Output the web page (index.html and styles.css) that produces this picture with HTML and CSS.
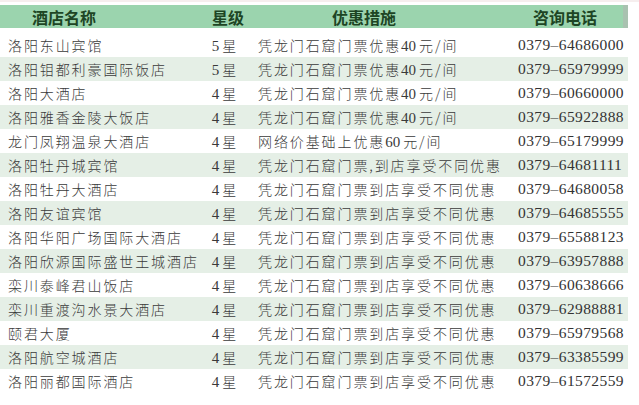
FILE: index.html
```html
<!DOCTYPE html>
<html lang="zh-CN">
<head>
<meta charset="utf-8">
<title>酒店优惠</title>
<link rel="stylesheet" href="styles.css">
</head>
<body>
<div class="table">
  <div class="row head">
    <div class="c name">酒店名称</div>
    <div class="c star">星级</div>
    <div class="c offer">优惠措施</div>
    <div class="c phone">咨询电话</div>
  </div>
  <div class="body">
    <div class="row"><div class="c name">洛阳东山宾馆</div><div class="c star"><span class="n">5</span>星</div><div class="c offer">凭龙门石窟门票优惠<span class="n">40</span>元/间</div><div class="c phone">0379–64686000</div></div>
    <div class="row alt"><div class="c name">洛阳钼都利豪国际饭店</div><div class="c star"><span class="n">5</span>星</div><div class="c offer">凭龙门石窟门票优惠<span class="n">40</span>元/间</div><div class="c phone">0379–65979999</div></div>
    <div class="row"><div class="c name">洛阳大酒店</div><div class="c star"><span class="n">4</span>星</div><div class="c offer">凭龙门石窟门票优惠<span class="n">40</span>元/间</div><div class="c phone">0379–60660000</div></div>
    <div class="row alt"><div class="c name">洛阳雅香金陵大饭店</div><div class="c star"><span class="n">4</span>星</div><div class="c offer">凭龙门石窟门票优惠<span class="n">40</span>元/间</div><div class="c phone">0379–65922888</div></div>
    <div class="row"><div class="c name">龙门凤翔温泉大酒店</div><div class="c star"><span class="n">4</span>星</div><div class="c offer">网络价基础上优惠<span class="n">60</span>元/间</div><div class="c phone">0379–65179999</div></div>
    <div class="row alt"><div class="c name">洛阳牡丹城宾馆</div><div class="c star"><span class="n">4</span>星</div><div class="c offer">凭龙门石窟门票,到店享受不同优惠</div><div class="c phone">0379–64681111</div></div>
    <div class="row"><div class="c name">洛阳牡丹大酒店</div><div class="c star"><span class="n">4</span>星</div><div class="c offer">凭龙门石窟门票到店享受不同优惠</div><div class="c phone">0379–64680058</div></div>
    <div class="row alt"><div class="c name">洛阳友谊宾馆</div><div class="c star"><span class="n">4</span>星</div><div class="c offer">凭龙门石窟门票到店享受不同优惠</div><div class="c phone">0379–64685555</div></div>
    <div class="row"><div class="c name">洛阳华阳广场国际大酒店</div><div class="c star"><span class="n">4</span>星</div><div class="c offer">凭龙门石窟门票到店享受不同优惠</div><div class="c phone">0379–65588123</div></div>
    <div class="row alt"><div class="c name">洛阳欣源国际盛世王城酒店</div><div class="c star"><span class="n">4</span>星</div><div class="c offer">凭龙门石窟门票到店享受不同优惠</div><div class="c phone">0379–63957888</div></div>
    <div class="row"><div class="c name">栾川泰峰君山饭店</div><div class="c star"><span class="n">4</span>星</div><div class="c offer">凭龙门石窟门票到店享受不同优惠</div><div class="c phone">0379–60638666</div></div>
    <div class="row alt"><div class="c name">栾川重渡沟水景大酒店</div><div class="c star"><span class="n">4</span>星</div><div class="c offer">凭龙门石窟门票到店享受不同优惠</div><div class="c phone">0379–62988881</div></div>
    <div class="row"><div class="c name">颐君大厦</div><div class="c star"><span class="n">4</span>星</div><div class="c offer">凭龙门石窟门票到店享受不同优惠</div><div class="c phone">0379–65979568</div></div>
    <div class="row alt"><div class="c name">洛阳航空城酒店</div><div class="c star"><span class="n">4</span>星</div><div class="c offer">凭龙门石窟门票到店享受不同优惠</div><div class="c phone">0379–63385599</div></div>
    <div class="row"><div class="c name">洛阳丽都国际酒店</div><div class="c star"><span class="n">4</span>星</div><div class="c offer">凭龙门石窟门票到店享受不同优惠</div><div class="c phone">0379–61572559</div></div>
  </div>
</div>
</body>
</html>
```
FILE: styles.css
```css
html, body {
  margin: 0;
  padding: 0;
  background: #ffffff;
}
body {
  padding-top: 3px;
  border-top: 2px solid #f6eeee;
  box-sizing: border-box;
}
.table {
  width: 628px;
  font-family: "Noto Sans CJK SC", "Liberation Serif", sans-serif;
  color: #3a3a3a;
}
.row {
  display: grid;
  grid-template-columns: 200px 50px 262px 116px;
  height: 24px;
  align-items: center;
}
.head {
  height: 23px;
  background: #9bd4ae;
  box-shadow: inset -5px 0 0 #a9c2b0;
  font-family: "Noto Sans CJK SC", sans-serif;
  font-weight: 700;
  font-size: 16px;
  color: #1d4524;
}
.head .name { padding-left: 32px; }
.head .star { text-align: center; padding-left: 6px; }
.head .offer { padding-left: 82px; }
.head .phone { padding-left: 21px; }
.body {
  padding-top: 5px;
}
.body .row {
  font-size: 14px;
  font-weight: 300;
  letter-spacing: 1.9px;
}
.alt {
  background: #e5efe6;
}
.c {
  white-space: nowrap;
}
.body .name { padding-left: 8px; }
.body .star { text-align: center; }
.body .offer { padding-left: 8px; }
.body .phone {
  padding-left: 6px;
  font-family: "Liberation Serif", serif;
  font-size: 15.5px;
  letter-spacing: 0.4px;
  font-weight: 400;
  color: #333;
}
.n {
  font-family: "Liberation Serif", serif;
  font-size: 15px;
  font-weight: 400;
  letter-spacing: 0;
  margin-right: 3px;
}
```
